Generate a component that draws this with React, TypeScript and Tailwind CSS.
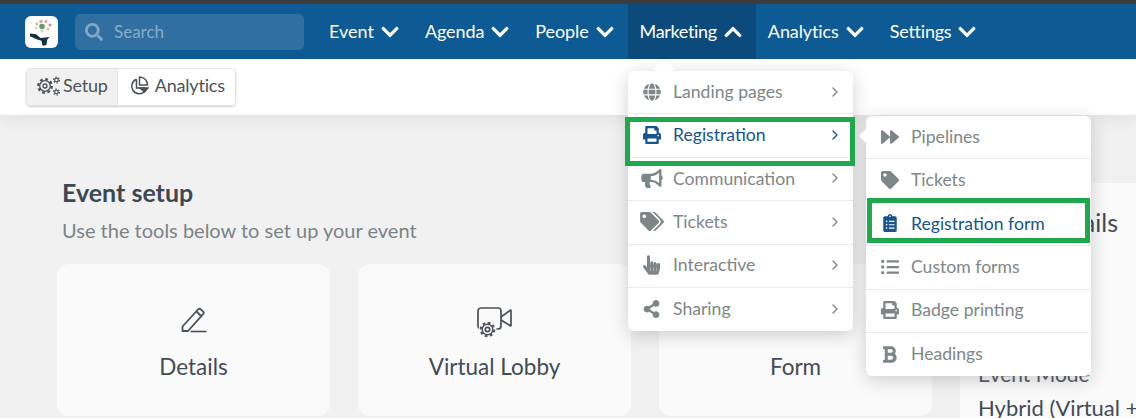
import type { ReactNode } from "react";
import {
  FaBold,
  FaBullhorn,
  FaChevronDown,
  FaChevronUp,
  FaClipboardList,
  FaForward,
  FaGlobe,
  FaHandPointer,
  FaListUl,
  FaPrint,
  FaSearch,
  FaShareAlt,
  FaTag,
  FaTags,
} from "react-icons/fa";
import { LuChevronRight } from "react-icons/lu";
import type { IconType } from "react-icons";

const navItems = [
  { label: "Event", tracking: "" },
  { label: "Agenda", tracking: "tracking-[-0.1px]" },
  { label: "People", tracking: "tracking-[-0.1px]" },
  { label: "Marketing", tracking: "tracking-[-0.33px]", open: true },
  { label: "Analytics", tracking: "tracking-[-0.1px]" },
  { label: "Settings", tracking: "tracking-[-0.25px]" },
];

type MenuItem = { label: string; icon: IconType; size: string; active?: boolean };

const marketingMenu: MenuItem[] = [
  { label: "Landing pages", icon: FaGlobe, size: "h-[18px] w-[18px]" },
  { label: "Registration", icon: FaPrint, size: "h-[18px] w-[18px]", active: true },
  { label: "Communication", icon: FaBullhorn, size: "h-[19px] w-[22px]" },
  { label: "Tickets", icon: FaTags, size: "h-[19px] w-[24px]" },
  { label: "Interactive", icon: FaHandPointer, size: "h-[20px] w-[17px]" },
  { label: "Sharing", icon: FaShareAlt, size: "h-[18px] w-[17px]" },
];

const registrationMenu: MenuItem[] = [
  { label: "Pipelines", icon: FaForward, size: "h-[18px] w-[18px]" },
  { label: "Tickets", icon: FaTag, size: "h-[18px] w-[18px]" },
  { label: "Registration form", icon: FaClipboardList, size: "h-[18px] w-[14px]", active: true },
  { label: "Custom forms", icon: FaListUl, size: "h-[18px] w-[18px]" },
  { label: "Badge printing", icon: FaPrint, size: "h-[18px] w-[18px]" },
  { label: "Headings", icon: FaBold, size: "h-[19px] w-[15px]" },
];

function Logo() {
  return (
    <div className="flex h-8 w-[33px] items-center justify-center rounded-md bg-white">
      <svg width="25" height="28" viewBox="0 0 25 28">
        <circle cx="8" cy="6" r="1.500" fill="#d9b98c" />
        <circle cx="12" cy="3.500" r="1.800" fill="#c9b98a" />
        <circle cx="17" cy="3.500" r="1.500" fill="#d8a58c" />
        <circle cx="21" cy="7" r="1.500" fill="#d48f78" />
        <circle cx="19" cy="11" r="1.500" fill="#d9c39a" />
        <circle cx="7" cy="10" r="1.300" fill="#dccfa8" />
        <circle cx="13" cy="8.500" r="2.800" fill="#5e9c7c" />
        <circle cx="13" cy="13" r="1.800" fill="#e2d6b0" />
        <path d="M1 15.500l6 .8 4.500 3.700 7-.8 2-.2-2.500 3-.5 5-4 .8-1-5-5-1.600-6.500-3z" fill="#12313f" />
      </svg>
    </div>
  );
}

function GearsIcon() {
  return (
    <svg width="23" height="20" viewBox="0 0 23 20" fill="none" stroke="#4b5157">
      <circle cx="8" cy="10" r="5.300" strokeWidth="1.300" />
      <circle cx="8" cy="10" r="6.800" strokeWidth="2.200" strokeDasharray="2.800 2.540" />
      <circle cx="8" cy="10" r="2" strokeWidth="1.300" />
      <circle cx="19.500" cy="4" r="1.800" strokeWidth="1.200" />
      <circle cx="19.500" cy="4" r="3" strokeWidth="1.200" strokeDasharray="1.500 1.640" />
      <circle cx="19.500" cy="16" r="1.800" strokeWidth="1.200" />
      <circle cx="19.500" cy="16" r="3" strokeWidth="1.200" strokeDasharray="1.500 1.640" />
    </svg>
  );
}

function PieIcon() {
  return (
    <svg width="20" height="20" viewBox="0 0 20 20" fill="none" stroke="#4b5157" strokeWidth="1.500">
      <path d="M7.500 3.200a7.500 7.500 0 1 0 8.300 12" />
      <path d="M7.500 3.200v8.800h8.500" />
      <path d="M10.500 1v8h8a8 8 0 0 0-8-8z" />
      <path d="M11 12h8l-3.500 4z" fill="#4b5157" />
    </svg>
  );
}

function PencilIcon() {
  return (
    <svg className="mb-[2px]" width="27" height="28" viewBox="0 0 26 28" fill="none" stroke="#4a5158" strokeWidth="1.800" strokeLinejoin="round">
      <path d="M2 20.500 17.500 3.500a2 2 0 0 1 2.800-.2l2.200 2a2 2 0 0 1 .1 2.800L7.500 25H2z" />
      <path d="m16 5.500 5 5" />
      <path d="M10 25.500h16" strokeWidth="1.600" />
    </svg>
  );
}

function LobbyIcon() {
  return (
    <svg className="-mb-[3px]" width="36" height="32" viewBox="0 0 36 32" fill="none" stroke="#4a5158" strokeWidth="1.700">
      <path d="M4 22a3 3 0 0 1-3-3V4a3 3 0 0 1 3-3h17a3 3 0 0 1 3 3v15a3 3 0 0 1-3 3h-3" />
      <path d="m24 10 9-6.500a.5.5 0 0 1 1 .3v14.400a.5.500 0 0 1-1 .3L24 13" />
      <circle cx="10.500" cy="22.500" r="9" fill="#fafafa" stroke="none" />
      <circle cx="10.500" cy="22.500" r="2.200" />
      <circle cx="10.500" cy="22.500" r="5.300" strokeWidth="1.400" />
      <circle cx="10.500" cy="22.500" r="6.800" strokeWidth="2" strokeDasharray="2.800 2.540" />
    </svg>
  );
}

function FlyoutRow({
  label,
  icon: Icon,
  size,
  active,
  chevron,
  last,
}: MenuItem & { chevron?: boolean; last?: boolean }) {
  return (
    <div
      className={`flex h-[43.400px] items-center pb-[1px] pl-[11px] pr-[10px] ${last ? "" : "border-b border-[#e9ebeb]"} ${
        active ? "text-[#16558d]" : "text-[#7d8787]"
      }`}
    >
      <span className="flex w-[25px] shrink-0 justify-center">
        <Icon className={size} />
      </span>
      <span className="ml-[9px] flex-1 text-[17.600px] leading-none">{label}</span>
      {chevron && <LuChevronRight className="h-[16px] w-[16px]" strokeWidth={2} />}
    </div>
  );
}

function ToolCard({ label, icon }: { label: string; icon?: ReactNode }) {
  return (
    <div className="h-[152px] w-[273px] shrink-0 rounded-xl bg-[#fafafa]">
      <div className="flex h-[72px] items-end justify-center">{icon}</div>
      <div className="mt-[16px] text-center text-[22.500px] leading-[30px] text-[#434b55]">{label}</div>
    </div>
  );
}

export default function App() {
  return (
    <div className="relative h-[418px] w-[1136px] overflow-hidden bg-[#f1f1f1] font-['Lato',sans-serif]">
      <div className="h-1 bg-[#3c3c3c]" />

      <header className="flex h-[55px] items-center bg-[#0d5a94] pl-[25px]">
        <Logo />
        <div className="ml-[17px] flex h-9 w-[229px] items-center rounded-[5px] bg-[#306f9f] pl-[10px]">
          <FaSearch className="h-[18px] w-[18px] text-[#7fa8c6]" />
          <span className="ml-[11px] text-[17px] text-[#86adca]">Search</span>
        </div>
        <nav className="ml-[13px] flex h-full">
          {navItems.map((item) => (
            <div
              key={item.label}
              className={`flex h-full items-center gap-[7px] pl-[12px] pr-[14px] text-[18px] text-white ${
                item.open ? "bg-[#0b4a7b]" : ""
              }`}
            >
              <span className={item.tracking}>{item.label}</span>
              {item.open ? (
                <FaChevronUp className="h-[20px] w-[18px]" />
              ) : (
                <FaChevronDown className="h-[20px] w-[18px]" />
              )}
            </div>
          ))}
        </nav>
      </header>

      <div className="flex h-[56px] items-center bg-white pb-[1px] pl-[26px] shadow-[0_6px_14px_rgba(0,0,0,0.06)]">
        <div className="flex h-[38px] overflow-hidden rounded-[5px] border border-[#e3e3e3] text-[18px] text-[#4d5359] shadow-[0_1px_2px_rgba(0,0,0,0.2)]">
          <div className="flex items-center gap-[3px] border-r border-[#e3e3e3] bg-[#f1f1f1] pb-[2px] pl-[10px] pr-[9px]">
            <GearsIcon />
            <span className="tracking-[-0.2px]">Setup</span>
          </div>
          <div className="flex items-center gap-[6px] bg-white pb-[2px] pl-[11px] pr-[10px]">
            <PieIcon />
            <span className="tracking-[-0.2px]">Analytics</span>
          </div>
        </div>
      </div>

      <main className="flex pl-[57px] pt-[61px]">
        <div className="w-[903px] shrink-0">
          <div className="pl-[5px]">
            <h2 className="text-[25px] font-bold leading-[32px] text-[#3d4854]">Event setup</h2>
            <p className="mt-[9px] text-[20px] leading-[26px] text-[#7c8387]">Use the tools below to set up your event</p>
          </div>
          <div className="mt-[21px] flex gap-[28px]">
            <ToolCard label="Details" icon={<PencilIcon />} />
            <ToolCard label="Virtual Lobby" icon={<LobbyIcon />} />
            <ToolCard label="Form" />
          </div>
        </div>
        <aside className="mt-[7px] h-[300px] flex-1 overflow-hidden rounded-tl-xl bg-[#fafafa] pl-[18px]">
          <div className="whitespace-nowrap pt-[23px] text-[25px] leading-[32px] text-[#434b55]">Event details</div>
          <div className="mt-[123px] whitespace-nowrap text-[21px] leading-[26px] text-[#5b6269]">Event Mode</div>
          <div className="mt-[6px] whitespace-nowrap text-[22px] leading-[30px] text-[#434b55]">Hybrid (Virtual + In-person)</div>
        </aside>
      </main>

      <div className="absolute left-[628px] top-[71px] w-[225px] rounded-md bg-white shadow-[0_4px_18px_rgba(0,0,0,0.18)]">
        <div className="absolute -top-[9px] left-[29px] h-[14px] w-[14px] rotate-45 bg-white" />
        <div className="relative">
          {marketingMenu.map((item, i) => (
            <FlyoutRow key={item.label} {...item} chevron last={i === marketingMenu.length - 1} />
          ))}
        </div>
      </div>

      <div className="absolute left-[866px] top-[116px] w-[225px] rounded-md bg-white shadow-[0_4px_18px_rgba(0,0,0,0.18)]">
        <div className="absolute -left-[5px] top-[15px] h-[10px] w-[10px] rotate-45 bg-white" />
        <div className="relative">
          {registrationMenu.map((item, i) => (
            <FlyoutRow key={item.label} {...item} last={i === registrationMenu.length - 1} />
          ))}
        </div>
      </div>

      <div className="absolute left-[625px] top-[117px] h-[49px] w-[230px] border-[5px] border-[#20a84f]" />
      <div className="absolute left-[867px] top-[198px] h-[45px] w-[223px] border-[5px] border-[#20a84f]" />
    </div>
  );
}
